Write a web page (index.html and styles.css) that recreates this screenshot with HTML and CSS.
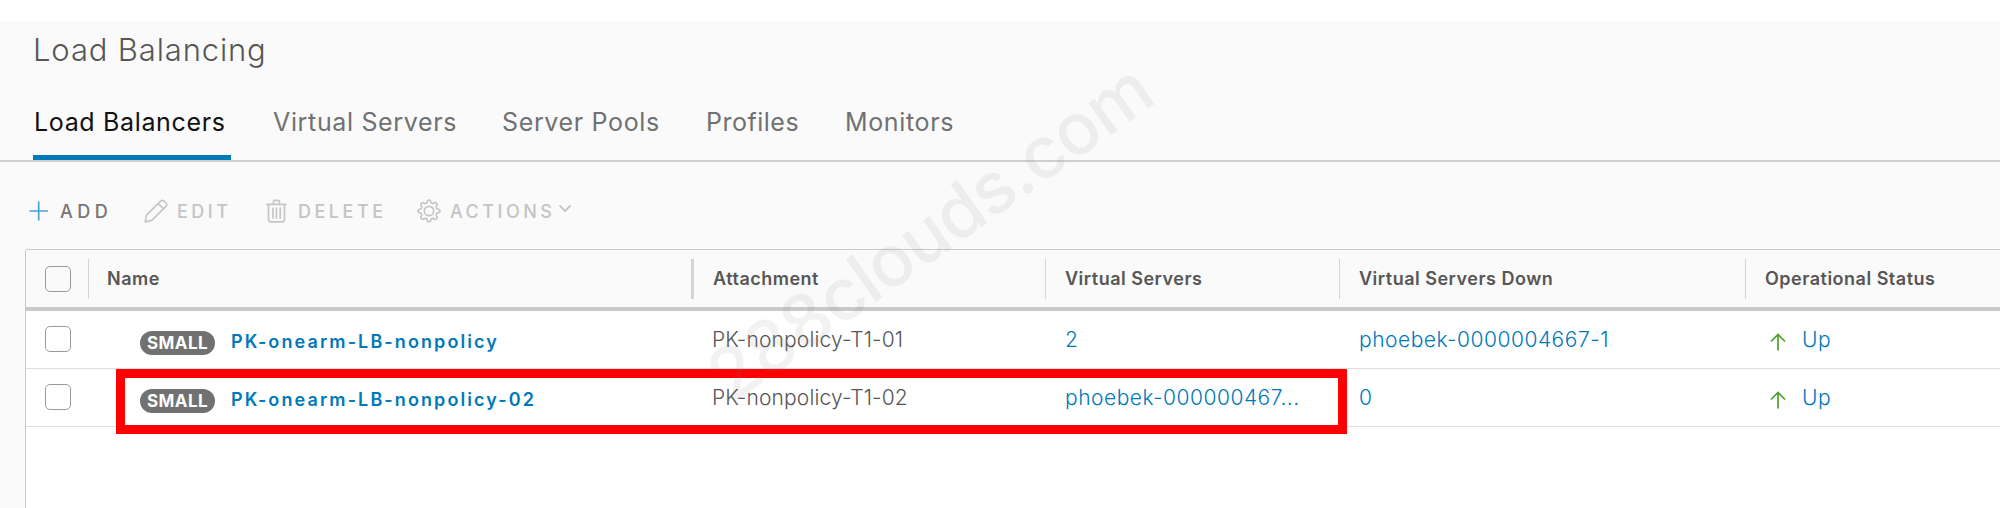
FILE: index.html
```html
<!DOCTYPE html>
<html lang="en">
<head>
<meta charset="utf-8">
<title>Load Balancing</title>
<link rel="stylesheet" href="styles.css">
</head>
<body>
<main class="page">
  <h1 class="title">Load Balancing</h1>
  <nav class="tabs">
    <a class="tab tab-active">Load Balancers</a>
    <a class="tab">Virtual Servers</a>
    <a class="tab">Server Pools</a>
    <a class="tab tab-profiles">Profiles</a>
    <a class="tab">Monitors</a>
  </nav>
  <div class="toolbar">
    <button class="btn btn-add"><svg class="icon" viewBox="0 0 24 24"><path d="M2.500 12h18.500M11.700 2.500v19"/></svg><span>ADD</span></button>
    <button class="btn"><svg class="icon" viewBox="0 0 24 24"><path d="M1.200 22.800 2.500 16.200 16.600 2.100Q18.300.5 20 2.100L21.900 4Q23.500 5.700 21.900 7.400L7.800 21.400ZM14.300 4.600l5.100 5.100"/></svg><span>EDIT</span></button>
    <button class="btn"><svg class="icon" viewBox="0 0 24 24"><path d="M2 5.300h19M8.500 5V3q0-1.700 1.700-1.700h2.600q1.700 0 1.700 1.700v2M3.500 5.500v15.200q0 2.100 2.100 2.100h11.800q2.100 0 2.100-2.100V5.500M8 9v10M11.500 9v10M15.200 9v10"/></svg><span>DELETE</span></button>
    <button class="btn"><svg class="icon" viewBox="0 0 24 24"><path d="M10.200 3.500Q10.200 1 12 1t1.800 2.500Q15 5 16.400 4.500q2.200-1.700 3.100-.2 1.500 1-.2 3.100-.5 1.400 1 2.700 2.700 0 2.700 1.900t-2.700 1.900q-1.500 1.300-1 2.700 1.700 2.100.2 3.100-.9 1.500-3.100-.2-1.400-.5-2.600 1Q13.800 23 12 23t-1.800-2.500Q9 19 7.600 19.500q-2.200 1.700-3.100.2-1.500-1 .2-3.100.5-1.400-1-2.700Q1 13.900 1 12t2.700-1.900q1.500-1.300 1-2.700-1.700-2.100-.2-3.100.9-1.500 3.100.2Q9 5 10.200 3.500z"/><circle cx="12" cy="12" r="4.700"/></svg><span>ACTIONS</span><svg class="chevron" viewBox="0 0 14 10"><path d="M1.500 1.500 7 7l5.500-5.500"/></svg></button>
  </div>
  <section class="datagrid">
    <div class="row head">
      <div class="cell pick"><i class="check"></i></div>
      <div class="cell name">Name</div>
      <div class="cell wide-sep">Attachment</div>
      <div class="cell sep">Virtual Servers</div>
      <div class="cell sep">Virtual Servers Down</div>
      <div class="cell sep">Operational Status</div>
    </div>
    <div class="row">
      <div class="cell pick"><i class="check"></i></div>
      <div class="cell lb"><span class="badge">SMALL</span><a class="lb-link">PK-onearm-LB-nonpolicy</a></div>
      <div class="cell text">PK-nonpolicy-T1-01</div>
      <div class="cell link">2</div>
      <div class="cell link">phoebek-0000004667-1</div>
      <div class="cell link status"><svg class="arrow" viewBox="0 0 16 18"><path d="M8 17.500V1.500M1 8.500 8 1.500l7 7"/></svg><span>Up</span></div>
    </div>
    <div class="row">
      <div class="cell pick"><i class="check"></i></div>
      <div class="cell lb"><span class="badge">SMALL</span><a class="lb-link">PK-onearm-LB-nonpolicy-02</a></div>
      <div class="cell text">PK-nonpolicy-T1-02</div>
      <div class="cell link">phoebek-000000467...</div>
      <div class="cell link">0</div>
      <div class="cell link status"><svg class="arrow" viewBox="0 0 16 18"><path d="M8 17.500V1.500M1 8.500 8 1.500l7 7"/></svg><span>Up</span></div>
    </div>
  </section>
  <div class="highlight"></div>
  <div class="watermark">288clouds.com</div>
</main>
</body>
</html>
```
FILE: styles.css
```css
* { box-sizing: border-box; }
body {
  margin: 0;
  background: #fff;
  font-family: Inter, "Liberation Sans", sans-serif;
  color: #565656;
}
.page {
  position: relative;
  width: 2000px;
  height: 508px;
  padding-top: 21px;
  overflow: hidden;
  background: linear-gradient(#fff 21px, #fafafa 21px);
  display: flex;
  flex-direction: column;
}
.title {
  margin: 0;
  padding: 9px 0 0 33px;
  height: 61px;
  font-size: 31px;
  font-weight: 300;
  line-height: 40px;
  letter-spacing: .85px;
}
.tabs {
  display: grid;
  grid-template-columns: 239px 229px 204px 139px auto;
  height: 80px;
  padding-left: 33px;
  border-bottom: 2px solid #cfcfcf;
}
.tab {
  height: 78px;
  padding: 20px 0 0 1px;
  font-size: 25px;
  line-height: 40px;
  letter-spacing: .65px;
  color: #717171;
  white-space: nowrap;
}
.tab-active {
  width: 198px;
  color: #111;
  border-bottom: 5px solid #0079b8;
}
.tab-profiles { letter-spacing: .5px; }
.toolbar {
  display: grid;
  grid-template-columns: 117px 121px 152px auto;
  align-items: center;
  height: 87px;
  padding: 11px 0 0 27px;
}
.btn {
  display: flex;
  align-items: center;
  height: 26px;
  padding: 0;
  border: 0;
  background: none;
  font: 500 18px/26px Inter, sans-serif;
  letter-spacing: 3.5px;
  color: #c4c4c4;
}
.btn span { padding-top: 2px; }
.icon {
  width: 24px;
  height: 24px;
  margin-right: 9px;
  fill: none;
  stroke: #c6c6c6;
  stroke-width: 1.7;
  stroke-linejoin: round;
  stroke-linecap: round;
}
.btn-add { color: #747474; letter-spacing: 4.5px; }
.btn-add .icon { stroke: #4ba3d1; stroke-linecap: butt; }
.chevron {
  width: 14px;
  height: 10px;
  margin: 0 0 5px 2px;
  fill: none;
  stroke: #bdbdbd;
  stroke-width: 1.7;
}
.datagrid {
  flex: 1;
  margin-left: 25px;
  background: #fff;
  border: 1px solid #c9c9c9;
  border-right: 0;
  border-bottom: 0;
  border-radius: 3px 0 0 0;
}
.row {
  display: grid;
  grid-template-columns: 62px 603px 354px 294px 406px auto;
  height: 58px;
  border-bottom: 1px solid #dedede;
}
.cell {
  display: flex;
  align-items: center;
  padding-left: 21px;
  white-space: nowrap;
}
.head {
  height: 61px;
  background: #fafafa;
  border-bottom: 4px solid #c9c9c9;
  font-size: 18px;
  font-weight: 600;
  letter-spacing: .5px;
}
.head .cell {
  height: 40px;
  margin-top: 9px;
  padding: 0 0 2px 19px;
}
.head .sep, .head .name { border-left: 1px solid #d4d4d4; }
.head .name { padding-left: 18px; }
.head .wide-sep { border-left: 3px solid #d4d4d4; }
.head .pick { padding-bottom: 0; }
.pick { padding: 0 0 1px 19px; }
.check {
  width: 26px;
  height: 26px;
  border: 1px solid #9a9a9a;
  border-radius: 5px;
}
.text, .link {
  font-size: 21px;
  font-weight: 300;
  color: #565656;
}
.text { letter-spacing: .15px; }
.link { padding-left: 20px; color: #0079b8; letter-spacing: .5px; }
.lb { padding: 6px 0 0 52px; }
.badge {
  width: 75px;
  height: 24px;
  border-radius: 12px;
  background: #717171;
  color: #fff;
  font-size: 17px;
  font-weight: 700;
  line-height: 24px;
  letter-spacing: .4px;
  text-align: center;
}
.lb-link {
  margin-left: 16px;
  padding-bottom: 2px;
  font-size: 18px;
  font-weight: 600;
  letter-spacing: 2.1px;
  color: #0079b8;
}
.status { padding-left: 25px; }
.arrow {
  width: 16px;
  height: 18px;
  margin: 5px 16px 0 0;
  fill: none;
  stroke: #4da12b;
  stroke-width: 1.7;
}
.highlight {
  position: absolute;
  left: 116px;
  top: 369px;
  width: 1231px;
  height: 65px;
  border: 9px solid #f00;
}
.watermark {
  position: absolute;
  left: 731px;
  top: 335px;
  font-size: 72px;
  font-weight: 500;
  line-height: 88px;
  letter-spacing: -.9px;
  white-space: nowrap;
  color: rgba(128, 128, 128, .1);
  transform: rotate(-35.4deg);
  transform-origin: 0 70px;
}
```
